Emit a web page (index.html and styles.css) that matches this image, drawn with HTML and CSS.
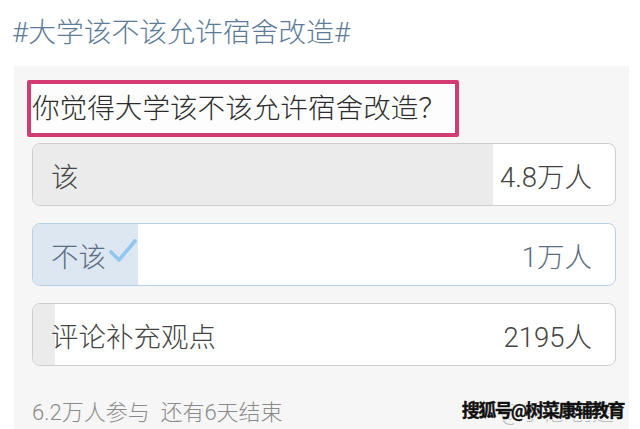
FILE: index.html
```html
<!DOCTYPE html>
<html><head>
<meta charset="utf-8">
<link rel="stylesheet" href="styles.css">
</head><body>
<div class="topic">#大学该不该允许宿舍改造#</div>
<div class="vote_card">
	<div class="question">你觉得大学该不该允许宿舍改造？</div>
	<div class="options">
		<div class="option">
			<div class="fill" style="width:79%"></div>
			<span class="label">该</span>
			<span class="count">4.8万人</span>
		</div>
		<div class="option chosen">
			<div class="fill" style="width:18%"></div>
			<span class="label">不该
				<svg class="check" width="28" height="26" viewBox="0 0 28 26"><path d="M2 14 L10 22 L26 3" fill="none" stroke="#92c6ee" stroke-width="3.6" stroke-linecap="round" stroke-linejoin="round"/></svg>
			</span>
			<span class="count">1万人</span>
		</div>
		<div class="option">
			<div class="fill" style="width:3.8%"></div>
			<span class="label">评论补充观点</span>
			<span class="count">2195人</span>
		</div>
	</div>
	<div class="foot">
		<span class="meta">6.2万人参与&nbsp;&nbsp;还有6天结束</span>
		<span class="creator">@手伦 创建</span>
		<span class="watermark">搜狐号@树菜康辅教育</span>
	</div>
</div>
</body></html>
```
FILE: styles.css
```css
html,body{margin:0;padding:0;background:#fff;}
body{font-family:Roboto,"Noto Sans CJK SC",sans-serif;height:429px;overflow:hidden;}
.topic{font-size:27.8px;line-height:32px;color:#5c7b99;padding:17px 0 0 12px;height:49px;font-weight:300;}
.vote_card{display:flex;flex-direction:column;margin:0 11px 0 14px;background:#f6f6f6;padding:14px 13px 0 18px;height:349px;}
.question{align-self:flex-start;margin-left:-5px;border:4px solid #d33b73;border-radius:2px;background:#fdfdfd;padding:4px 9px 3px 1px;font-size:27.6px;line-height:42px;color:#2c2c2c;font-weight:300;white-space:nowrap;}
.options{display:flex;flex-direction:column;gap:17px;margin-top:6px;}
.option{position:relative;display:flex;align-items:center;justify-content:space-between;height:61px;border:1px solid #cdcdcd;border-radius:8px;background:#fff;overflow:hidden;padding:0 23px 0 18px;font-size:27.5px;color:#444;font-weight:300;}
.option .fill{position:absolute;left:0;top:0;bottom:0;background:#ebebeb;}
.option .label,.option .count{position:relative;display:flex;align-items:center;gap:3px;}
.option.chosen{border-color:#b6cfe6;color:#5a6e84;}
.option.chosen .fill{background:#dde7f2;}
.check{margin-top:-8px;}
.foot{position:relative;display:flex;justify-content:space-between;align-items:center;height:40px;margin-top:24px;font-size:22px;color:#8a8a8a;font-weight:300;}
.creator{color:#b9bcc0;margin-right:2px;}
.watermark{position:absolute;right:-8px;top:6px;font-size:18px;font-weight:bold;color:#111;-webkit-text-stroke:0.4px #111;text-shadow:1px 1px 0 #fff,-1px -1px 0 #fff,1px -1px 0 #fff,-1px 1px 0 #fff;letter-spacing:-1.6px;}
```
